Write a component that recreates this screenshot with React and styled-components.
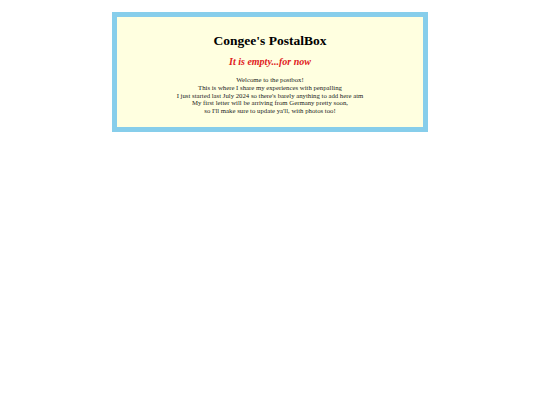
import React from 'react';
import styled, { createGlobalStyle } from 'styled-components';

const GlobalStyle = createGlobalStyle`
  body {
    margin: 0;
    background: #ffffff;
    font-family: "Liberation Serif", "Times New Roman", serif;
  }
`;

const PostalBox = styled.div`
  box-sizing: border-box;
  width: 316px;
  height: 120px;
  margin: 12px auto 0;
  padding: 16px 10px 0;
  border: 5px solid #87ceeb;
  background: #ffffe0;
  text-align: center;
  color: #000;
`;

const Title = styled.h1`
  margin: 0;
  font-size: 13.5px;
  font-weight: bold;
  line-height: 16px;
`;

const Status = styled.h2`
  margin: 7px 0 0;
  font-size: 10px;
  font-style: italic;
  font-weight: bold;
  line-height: 12px;
  color: #e02020;
`;

const Message = styled.p`
  margin: 8px 0 0;
  font-size: 6.75px;
  line-height: 7.8px;
  color: #222;
`;

const lines = [
  'Welcome to the postbox!',
  'This is where I share my experiences with penpalling',
  "I just started last July 2024 so there's barely anything to add here atm",
  'My first letter will be arriving from Germany pretty soon,',
  "so I'll make sure to update ya'll, with photos too!",
];

const App = () => (
  <>
    <GlobalStyle />
    <PostalBox>
      <Title>Congee's PostalBox</Title>
      <Status>It is empty...for now</Status>
      <Message>
        {lines.map((line, i) => (
          <React.Fragment key={i}>
            {line}
            {i < lines.length - 1 && <br />}
          </React.Fragment>
        ))}
      </Message>
    </PostalBox>
  </>
);

export default App;
